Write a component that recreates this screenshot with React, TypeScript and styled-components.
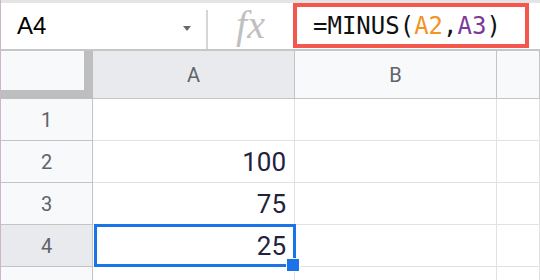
import React from "react";
import styled, {createGlobalStyle} from "styled-components";

const GlobalStyle = createGlobalStyle`
  html, body {
    margin: 0;
    padding: 0;
    background: #ffffff;
  }
  body {
    width: 540px;
    height: 280px;
    overflow: hidden;
  }
`;

const Frame = styled.div`
  box-sizing: border-box;
  width: 540px;
  height: 280px;
  border-left: 1px solid #cbb6cb;
  display: flex;
  flex-direction: column;
  overflow: hidden;
`;

const Toolbar = styled.div`
  box-sizing: border-box;
  height: 51px;
  flex: none;
  border-top: 3px solid #e4e4e4;
  border-bottom: 2px solid #c6c6c6;
  display: flex;
  align-items: stretch;
`;

const NameBox = styled.div`
  width: 205px;
  box-sizing: border-box;
  padding: 0 15px 0 16px;
  display: flex;
  align-items: center;
  justify-content: space-between;
  font-family: "Liberation Sans", Arial, sans-serif;
  font-size: 24px;
  color: #000;
`;

const Caret = styled.span`
  width: 0;
  height: 0;
  margin-top: 4px;
  border-left: 4px solid transparent;
  border-right: 4px solid transparent;
  border-top: 5px solid #6a6a6a;
`;

const Divider = styled.div`
  width: 2px;
  margin-top: 7px;
  background: #d6d6d6;
`;

const FxLabel = styled.div`
  width: 85px;
  display: flex;
  align-items: center;
  justify-content: center;
  font-family: "Liberation Serif", "Times New Roman", serif;
  font-style: italic;
  font-size: 40px;
  color: #c0c0c0;
  padding-bottom: 3px;
`;

const FormulaBox = styled.div`
  flex: 1;
  margin-right: 11px;
  margin-bottom: 1px;
  box-sizing: border-box;
  border: 4px solid #f4574b;
  padding-left: 16px;
  display: flex;
  align-items: center;
  font-family: "DejaVu Sans Mono", "Liberation Mono", monospace;
  font-size: 24px;
  color: #111;
  white-space: pre;
`;

const Ref = styled.span<{ $color: string }>`
  color: ${p => p.$color};
`;

const Sheet = styled.div`
  position: relative;
  flex: 1;
  display: grid;
  grid-template-columns: 92px 202px 202px 1fr;
  grid-template-rows: 48px repeat(5, 42px);
`;

const Corner = styled.div`
  box-sizing: border-box;
  background: #f8f9fa;
  border-right: 9px solid #bebebe;
  border-bottom: 9px solid #bebebe;
`;

const HeaderCell = styled.div<{ $selected?: boolean }>`
  box-sizing: border-box;
  background: ${p => (p.$selected ? "#e8eaed" : "#f8f9fa")};
  border-right: 1px solid #c4c4c4;
  border-bottom: 1px solid #c4c4c4;
  display: flex;
  align-items: center;
  justify-content: center;
  font-family: Roboto, "Liberation Sans", sans-serif;
  font-size: 20px;
  color: #5f6368;
`;

const Cell = styled.div`
  box-sizing: border-box;
  border-right: 1px solid #e2e2e2;
  border-bottom: 1px solid #e2e2e2;
  display: flex;
  align-items: center;
  justify-content: flex-end;
  padding-right: 8px;
  font-family: Roboto, "Liberation Sans", sans-serif;
  font-size: 26px;
  color: #22223e;
`;

const Selection = styled.div`
  position: absolute;
  left: 93px;
  top: 173px;
  width: 202px;
  height: 43px;
  box-sizing: border-box;
  border: 3px solid #1a73e8;
`;

const FillHandle = styled.div`
  position: absolute;
  right: -7px;
  bottom: -8px;
  width: 12px;
  height: 12px;
  background: #1a73e8;
  border: 1px solid #ffffff;
`;

const rows = [
    {n: 1, a: ""},
    {n: 2, a: "100"},
    {n: 3, a: "75"},
    {n: 4, a: "25"},
    {n: 5, a: ""},
];

export default function App() {
    return (
        <>
            <GlobalStyle/>
            <Frame>
                <Toolbar>
                    <NameBox>A4<Caret/></NameBox>
                    <Divider/>
                    <FxLabel>fx</FxLabel>
                    <FormulaBox>
                        =MINUS(<Ref $color="#f6921e">A2</Ref>,<Ref $color="#7b3a96">A3</Ref>)
                    </FormulaBox>
                </Toolbar>
                <Sheet>
                    <Corner/>
                    <HeaderCell $selected>A</HeaderCell>
                    <HeaderCell>B</HeaderCell>
                    <HeaderCell/>
                    {rows.map(r => (
                        <React.Fragment key={r.n}>
                            <HeaderCell $selected={r.n === 4}>{r.n}</HeaderCell>
                            <Cell>{r.a}</Cell>
                            <Cell/>
                            <Cell/>
                        </React.Fragment>
                    ))}
                    <Selection><FillHandle/></Selection>
                </Sheet>
            </Frame>
        </>
    );
}
